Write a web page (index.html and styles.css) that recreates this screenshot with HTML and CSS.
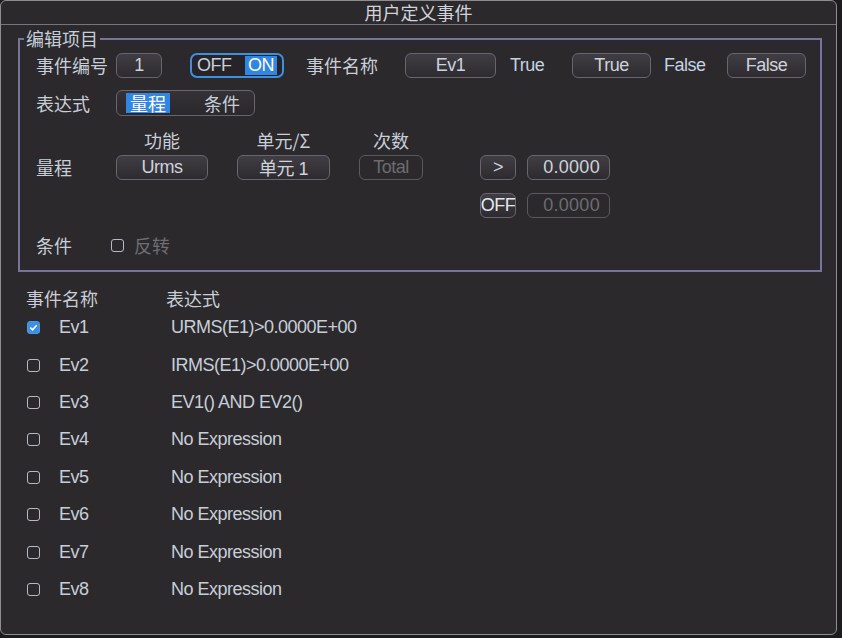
FILE: index.html
```html
<!DOCTYPE html>
<html lang="zh">
<head>
    <meta charset="UTF-8">
    <title>用户定义事件</title>
    <link rel="stylesheet" href="styles.css">
</head>
<body>
    <div class="window">
        <div class="title-bar">用户定义事件</div>

        <!-- 编辑项目 -->
        <div class="frame">
            <span class="legend">编辑项目</span>

            <div class="row">
                <span class="label">事件编号</span>
                <span class="btn w-num">1</span>
                <span class="toggle">
                    <span class="opt">OFF</span>
                    <span class="opt sel">ON</span>
                </span>
                <span class="label name-label">事件名称</span>
                <span class="btn w-ev">Ev1</span>
                <span class="plain true-label">True</span>
                <span class="btn w-tf">True</span>
                <span class="plain false-label">False</span>
                <span class="btn w-tf">False</span>
            </div>

            <div class="row">
                <span class="label">表达式</span>
                <span class="segment">
                    <span class="seg sel">量程</span>
                    <span class="seg">条件</span>
                </span>
            </div>

            <div class="row head-row">
                <span class="label"></span>
                <span class="col w-func">功能</span>
                <span class="col w-elem gap-col">单元/Σ</span>
                <span class="col w-order gap-col">次数</span>
            </div>

            <div class="row range-row">
                <span class="label">量程</span>
                <span class="btn w-func">Urms</span>
                <span class="btn w-elem gap-col">单元 1</span>
                <span class="btn w-order gap-col disabled">Total</span>
                <span class="btn w-op gap-op">&gt;</span>
                <span class="btn w-val value">0.0000</span>
            </div>

            <div class="row off-row">
                <span class="btn w-op off-btn">OFF</span>
                <span class="btn w-val value disabled">0.0000</span>
            </div>

            <div class="row">
                <span class="label cond-label">条件</span>
                <span class="check"></span>
                <span class="plain disabled-text invert">反转</span>
            </div>
        </div>

        <!-- 事件列表 -->
        <div class="list">
            <div class="list-head">
                <span class="c-name">事件名称</span>
                <span>表达式</span>
            </div>
            <div class="list-row"><span class="check on"></span><span class="ev">Ev1</span><span class="expr">URMS(E1)&gt;0.0000E+00</span></div>
            <div class="list-row"><span class="check"></span><span class="ev">Ev2</span><span class="expr">IRMS(E1)&gt;0.0000E+00</span></div>
            <div class="list-row"><span class="check"></span><span class="ev">Ev3</span><span class="expr">EV1() AND EV2()</span></div>
            <div class="list-row"><span class="check"></span><span class="ev">Ev4</span><span class="expr">No Expression</span></div>
            <div class="list-row"><span class="check"></span><span class="ev">Ev5</span><span class="expr">No Expression</span></div>
            <div class="list-row"><span class="check"></span><span class="ev">Ev6</span><span class="expr">No Expression</span></div>
            <div class="list-row"><span class="check"></span><span class="ev">Ev7</span><span class="expr">No Expression</span></div>
            <div class="list-row"><span class="check"></span><span class="ev">Ev8</span><span class="expr">No Expression</span></div>
        </div>
    </div>
</body>
</html>
```

FILE: styles.css
```css
body {
    margin: 0;
    background: #1c1b1d;
    font-family: "Liberation Sans", "Noto Sans CJK SC", sans-serif;
    font-size: 18px;
    color: #c8ced8;
}

.window {
    width: 835px;
    height: 633px;
    background: #2b292c;
    border: 1px solid #8e8d94;
    border-radius: 6px;
}

.title-bar {
    height: 23px;
    line-height: 23px;
    border-bottom: 1px solid #76757c;
    text-align: center;
    font-family: "Noto Sans CJK SC", sans-serif;
    font-size: 18px;
    color: #d2d3da;
}

/* Rahmen "编辑项目" */
.frame {
    position: relative;
    margin: 13px 14px 0 17px;
    padding: 6px 0 6px 16px;
    border: 2px solid #77739a;
}

.legend {
    position: absolute;
    top: -12px;
    left: 4px;
    padding: 0 2px;
    background: #2b292c;
    font-family: "Noto Sans CJK SC", sans-serif;
    font-size: 18px;
    line-height: 20px;
}

.row {
    display: flex;
    align-items: center;
    height: 38px;
}

.head-row {
    height: 28px;
    align-items: flex-end;
}

.range-row { height: 34px; }
.off-row { height: 42px; padding-left: 444px; }

.label, .col, .list-head, .invert {
    font-family: "Noto Sans CJK SC", sans-serif;
    font-size: 18px;
}

.label {
    width: 80px;
    flex-shrink: 0;
}

.name-label { width: 99px; margin-left: 22px; }
.cond-label { width: 75px; }

.plain, .btn, .opt, .ev, .expr { letter-spacing: -0.5px; }

.true-label { width: 62px; margin-left: 14px; color: #c4d2e2; }
.false-label { width: 63px; margin-left: 13px; color: #c4d2e2; }
.invert { margin-left: 10px; letter-spacing: 0; }
.disabled-text { color: #6e6e72; }

.btn {
    box-sizing: border-box;
    height: 25px;
    display: flex;
    align-items: center;
    justify-content: center;
    border: 1px solid #67666d;
    border-radius: 6px;
    background: linear-gradient(#403e44, #2d2b2f);
    color: #cdd3dc;
    flex-shrink: 0;
}

.btn.disabled {
    background: #2b292c;
    border-color: #5a595f;
    color: #6c6c70;
}

.w-num { width: 46px; }
.w-ev { width: 91px; }
.w-tf { width: 79px; }
.w-func { width: 92px; text-align: center; }
.w-elem { width: 93px; text-align: center; }
.w-order { width: 64px; text-align: center; }
.w-op { width: 36px; }
.w-val { width: 83px; margin-left: 11px; }
.gap-col { margin-left: 29px; }
.gap-op { margin-left: 57px; }

.value {
    justify-content: flex-end;
    padding-right: 9px;
    letter-spacing: 0.3px;
}

.off-btn { color: #e4e8f0; }

.col {
    line-height: 20px;
    flex-shrink: 0;
}

/* OFF/ON Schalter */
.toggle {
    box-sizing: border-box;
    width: 94px;
    height: 25px;
    margin-left: 28px;
    display: flex;
    align-items: center;
    justify-content: space-between;
    padding: 0 5px 0 5px;
    border: 2px solid #3d8fe0;
    border-radius: 7px;
    background: #262428;
}

.opt { line-height: 19px; }
.opt.sel {
    background: #2f86e4;
    color: #fff;
    padding: 0 3px;
}

/* 量程 / 条件 */
.segment {
    box-sizing: border-box;
    width: 139px;
    height: 26px;
    display: flex;
    align-items: center;
    padding-left: 9px;
    border: 1px solid #67666d;
    border-radius: 6px;
    background: linear-gradient(#343236, #2a282c);
}

.seg {
    font-family: "Noto Sans CJK SC", sans-serif;
    font-size: 18px;
    line-height: 20px;
}

.seg.sel {
    background: #2f86e4;
    color: #fff;
    margin-right: 34px;
    padding: 0 4px;
}

/* Checkboxen */
.check {
    box-sizing: border-box;
    width: 13px;
    height: 13px;
    border: 1.5px solid #b6bac4;
    border-radius: 3px;
    flex-shrink: 0;
}

.check.on {
    border-color: #4a98ea;
    background: #3d8fe6 url("data:image/svg+xml,%3Csvg xmlns='http://www.w3.org/2000/svg' viewBox='0 0 12 12'%3E%3Cpath d='M2.5 6.2l2.4 2.4 4.6-5' fill='none' stroke='white' stroke-width='1.8'/%3E%3C/svg%3E") center / 11px no-repeat;
}

/* Ereignisliste */
.list {
    margin-top: 15px;
    padding-left: 25px;
}

.list-head {
    display: flex;
    height: 22px;
    align-items: center;
}

.c-name { width: 140px; }

.list-row {
    display: flex;
    align-items: center;
    height: 37.4px;
    padding-left: 1px;
}

.ev { width: 112px; margin-left: 19px; }
```
